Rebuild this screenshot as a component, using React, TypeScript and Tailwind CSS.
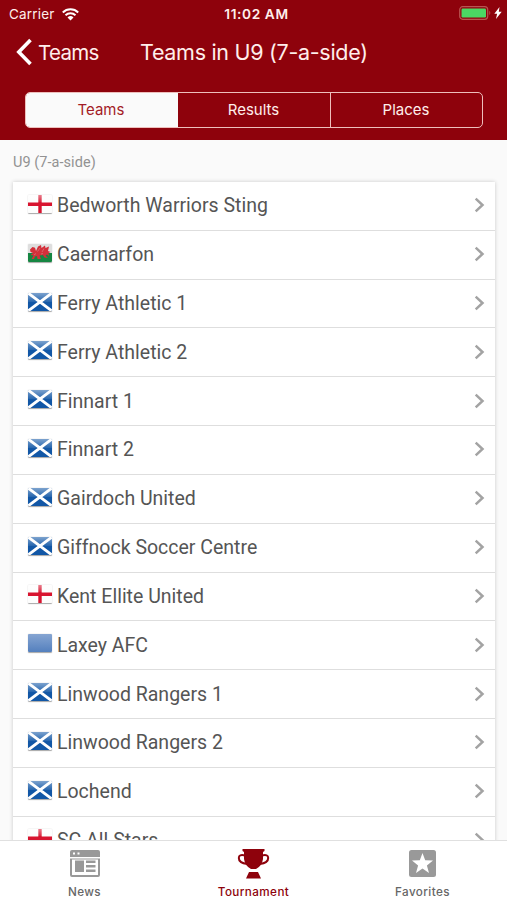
import React from "react";

type Country = "england" | "wales" | "scotland" | "none";

const teams: { name: string; country: Country }[] = [
  { name: "Bedworth Warriors Sting", country: "england" },
  { name: "Caernarfon", country: "wales" },
  { name: "Ferry Athletic 1", country: "scotland" },
  { name: "Ferry Athletic 2", country: "scotland" },
  { name: "Finnart 1", country: "scotland" },
  { name: "Finnart 2", country: "scotland" },
  { name: "Gairdoch United", country: "scotland" },
  { name: "Giffnock Soccer Centre", country: "scotland" },
  { name: "Kent Ellite United", country: "england" },
  { name: "Laxey AFC", country: "none" },
  { name: "Linwood Rangers 1", country: "scotland" },
  { name: "Linwood Rangers 2", country: "scotland" },
  { name: "Lochend", country: "scotland" },
  { name: "SC All Stars", country: "england" },
];

function Flag({ country }: { country: Country }) {
  return (
    <svg width="24" height="18" viewBox="0 0 24 18" className="shrink-0 rounded-[1px] shadow-[0_0.5px_1px_rgba(0,0,0,0.35)]">
      <defs>
        <linearGradient id="gloss" x1="0" y1="0" x2="0" y2="1">
          <stop offset="0" stopColor="#fff" stopOpacity="0.45" />
          <stop offset="1" stopColor="#fff" stopOpacity="0.08" />
        </linearGradient>
        <linearGradient id="plain" x1="0" y1="0" x2="0" y2="1">
          <stop offset="0" stopColor="#86a5d2" />
          <stop offset="1" stopColor="#5480be" />
        </linearGradient>
      </defs>
      {country === "england" && (
        <>
          <path d="M0 0h24v18H0z" fill="#fdfdfd" />
          <path d="M10.300 0h3.400v18h-3.400zM0 7.500h24v3.400H0z" fill="#d8142f" />
          <path d="M0 0h24v7H0z" fill="url(#gloss)" />
        </>
      )}
      {country === "wales" && (
        <>
          <path d="M0 0h24v9H0z" fill="#dedede" />
          <path d="M0 9h24v9H0z" fill="#168642" />
          <path
            d="M2 5.500L4.500 3l2.500.8L8 7l2-4.500L13 1l.5 3L17 1.500l.5 2.500 3.500-1.500-1 4.500 2.500 1-2 1 .5 3-2-1.500-1.500 1 2.500 2.500-3.500-.5-1.500-2.500-3.500.5 1.500 3.500h-3.500l-.5-3-2 .5-1 2.500H3.500l2-3.500-3-.5 2.500-2L2.500 8z"
            fill="#d42f3a"
          />
          <path d="M9.500 7.500L12 4M14 8l2-3.500M6 11l2-1.500M13 10l2-.5" stroke="#d9d0cb" strokeOpacity="0.6" strokeWidth="0.600" />
        </>
      )}
      {country === "scotland" && (
        <>
          <path d="M0 0h24v18H0z" fill="#1257a6" />
          <path d="M0 0h24v9H0z" fill="url(#gloss)" />
          <path d="M0 0l24 18M24 0L0 18" stroke="#fff" strokeWidth="2.900" />
        </>
      )}
      {country === "none" && <path d="M0 0h24v18H0z" fill="url(#plain)" />}
    </svg>
  );
}

function TeamRow({ name, country }: { name: string; country: Country }) {
  return (
    <li className="flex h-[48.82px] items-center border-b-[1.500px] border-[#dedede] pl-[15px] pr-[10px]">
      <div className="-mt-[4px]">
        <Flag country={country} />
      </div>
      <span className="ml-[5px] mt-[1px] grow whitespace-nowrap text-[19.5px] leading-6 text-[#555]">{name}</span>
      <svg width="11" height="16" viewBox="0 0 11 16" fill="none" className="-mt-[1px]">
        <path d="M1.700 1.700L8.500 8l-6.800 6.300" stroke="#a3a3a3" strokeWidth="2.500" />
      </svg>
    </li>
  );
}

function StatusBar() {
  return (
    <div className="grid h-[28px] grid-cols-3 items-center pl-[9px] pr-[5px] text-[13.500px] leading-4">
      <div className="flex items-center gap-[7px]">
        <span className="tracking-[0.200px]">Carrier</span>
        <svg width="17" height="13" viewBox="0 0 17 13" fill="none" stroke="#fff" strokeWidth="2">
          <path d="M.8 4.500a11 11 0 0 1 15.400 0M3.500 7.300a7.200 7.200 0 0 1 10 0" />
          <path d="M8.500 12.500L5.500 9.500a4.300 4.300 0 0 1 6 0z" fill="#fff" stroke="none" />
        </svg>
      </div>
      <span className="pl-[2px] text-center text-[13.700px] font-semibold tracking-[0.600px]">11:02 AM</span>
      <div className="flex items-center justify-end gap-[2px] pb-[2px]">
        <svg width="33" height="14" viewBox="0 0 33 14">
          <rect x=".7" y=".7" width="28" height="12.600" rx="3" fill="none" stroke="#b85551" strokeWidth="1.200" />
          <rect x="2.500" y="2.500" width="24.500" height="9" rx="1.200" fill="#4bd863" />
          <path d="M30.300 4.800q2 2.200 0 4.400z" fill="#b85551" />
        </svg>
        <svg width="8" height="12" viewBox="0 0 8 12">
          <path d="M5.500 0L.3 6.700h2.800L2 12l5.700-7.300H4.800z" fill="#fff" />
        </svg>
      </div>
    </div>
  );
}

function TabBar() {
  return (
    <nav className="grid h-[60px] shrink-0 grid-cols-3 border-t border-[#e0e0e0] bg-white font-['Inter',sans-serif] text-[11.700px] font-medium leading-[14px] tracking-[0.400px] text-[#666]">
      <div className="flex flex-col items-center pt-[9px]">
        <svg width="30" height="27" viewBox="0 0 30 27">
          <path
            fill="#999"
            fillRule="evenodd"
            d="M2 0h26q2 0 2 2v5H0V2q0-2 2-2zM3 2.500v2h2v-2zM7.500 2.500v2h2v-2zM0 8.500h30V25q0 2-2 2H2q-2 0-2-2zM2 9.500v15.500h26V9.500z"
          />
          <path fill="#999" d="M5 10.500h9v11.500H5zM16 10.500h9.500v2.500H16zM16 15h9.500v2.500H16zM16 19.500h9.500V22H16z" />
        </svg>
        <span className="mt-[8px]">News</span>
      </div>
      <div className="flex flex-col items-center pt-[8px] text-[#8e020c]">
        <svg width="33" height="30" viewBox="0 0 33 30" fill="currentColor">
          <path d="M5.500 0h22v2l-1.500 1v7q-1 7-7 10h-5q-6-3-7-10V3L5.500 2z" />
          <path d="M8 6.500Q1.800 5 1.800 9q0 5 8.500 6M25 6.500q6.200-1.500 6.200 2.500 0 5-8.500 6" fill="none" stroke="currentColor" strokeWidth="2" />
          <path d="M12 23h9l3 6.500H9z" />
        </svg>
        <span className="mt-[6px]">Tournament</span>
      </div>
      <div className="flex flex-col items-center pt-[9px]">
        <svg width="27" height="27" viewBox="0 0 27 27">
          <rect width="27" height="27" rx="2.500" fill="#999" />
          <path d="M13.500 3l2.700 7.300 7.800.3-6.100 4.800 2.100 7.600-6.500-4.400L7 23l2.100-7.600L3 10.600l7.800-.3z" fill="#fff" />
        </svg>
        <span className="mt-[8px]">Favorites</span>
      </div>
    </nav>
  );
}

export default function App() {
  return (
    <div className="flex h-[900px] w-[507px] flex-col overflow-hidden bg-[#fafafa] font-['Roboto',sans-serif]">
      <header className="h-[140px] shrink-0 bg-[#8e020c] font-['Inter',sans-serif] text-[#ffeeeb]">
        <StatusBar />
        <div className="flex h-[48px] items-center pl-[16px]">
          <svg width="17" height="28" viewBox="0 0 17 28" fill="none">
            <path d="M14.500 2L2.800 14l11.700 12" stroke="#fff" strokeWidth="3.600" />
          </svg>
          <span className="ml-[5px] mt-[1px] w-[102px] text-[20.500px] leading-6 tracking-[-0.700px]">Teams</span>
          <h1 className="-mt-[1px] whitespace-nowrap text-[21.500px] leading-6 tracking-[-0.300px]">Teams in U9 (7-a-side)</h1>
        </div>
        <div className="ml-[25px] mr-[24px] mt-[16px] grid h-[36px] grid-cols-[152px_153px_1fr] overflow-hidden rounded-[5px] border border-[#eebfbc] text-center text-[15px] leading-[34px]">
          <div className="bg-[#fafafa] pr-[2px] text-[#a31c26]">Teams</div>
          <div className="border-r border-[#eebfbc] pr-px">Results</div>
          <div className="pr-px">Places</div>
        </div>
      </header>
      <main className="min-h-0 grow overflow-hidden">
        <h2 className="h-[42px] pl-[13px] pt-[14px] text-[14.500px] leading-[18px] tracking-[0.050px] text-[#929292]">U9 (7-a-side)</h2>
        <ul className="ml-[13px] mr-[12px] bg-white shadow-[0_0_4px_rgba(0,0,0,0.2)]">
          {teams.map((team) => (
            <TeamRow key={team.name} name={team.name} country={team.country} />
          ))}
        </ul>
      </main>
      <TabBar />
    </div>
  );
}
